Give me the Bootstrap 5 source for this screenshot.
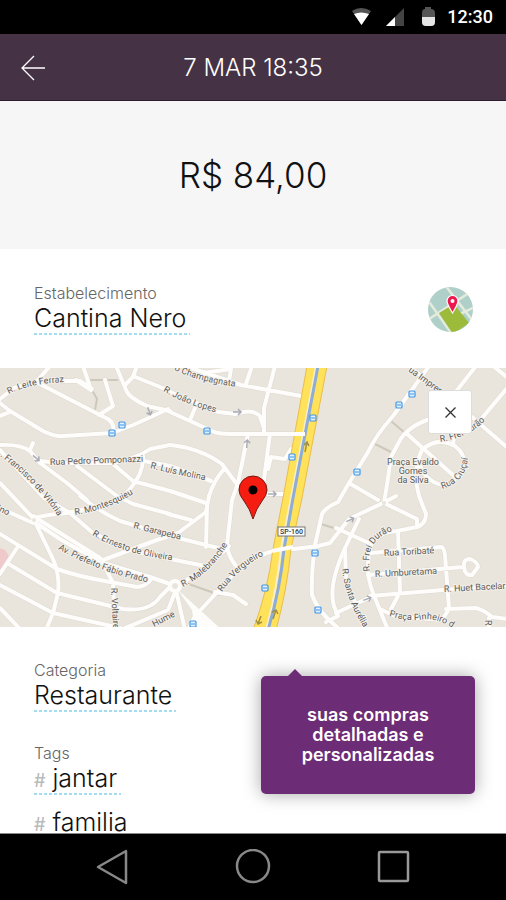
<!DOCTYPE html>
<html lang="pt-BR">
<head>
<meta charset="utf-8">
<meta name="viewport" content="width=device-width, initial-scale=1">
<title>Detalhes da compra</title>
<link href="https://cdn.jsdelivr.net/npm/bootstrap@5.3.0/dist/css/bootstrap.min.css" rel="stylesheet">
<style>
body{font-family:Inter,"Open Sans",sans-serif;font-weight:300;color:#111;background:#fff}
button{font-family:inherit;font-weight:inherit;color:inherit;background:none;border:0;padding:0}
svg{display:block}
.status-bar{height:34px;padding-right:13px;font:500 18px/34px Roboto,sans-serif}
.app-bar{display:grid;grid-template-columns:1fr auto 1fr;height:67px;padding:2px 21px 0;background:#453345;border-bottom:1px solid #2b1b2d}
.app-bar h1{font-size:24px;line-height:32px;font-weight:300}
.amount{height:148px;background:#f6f6f6;font-size:35px;line-height:44px}
.place{height:119px;padding:1px 33px 0 34px}
.caption{font-size:16px;line-height:19px;color:#666}
.value{display:block;font-size:25px;line-height:30px;padding:0 4px 2px 0;background:repeating-linear-gradient(90deg,#a4dcf2 0 3px,transparent 3px 5px) bottom/100% 2px no-repeat}
.value.plain{background:none;margin-top:12px}
.value .hash{font-size:18px;line-height:18px;font-weight:500;color:#bbb;margin-right:7px}
.tags-caption{margin-top:32px}
.map-area svg.streets{width:100%;height:259px}
.close-map{top:22px;right:34px;width:44px;height:44px;background:#fff;border:1px solid #ddd;border-radius:3px}
.streets text{font:400 9px Roboto,sans-serif;fill:#5c5a57;stroke:#f4f1ec;stroke-width:2px;paint-order:stroke;stroke-linejoin:round}
.details{padding:34px 31px 0 34px}
.callout{width:214px;height:118px;margin-top:15px;background:#6d2c76;border-radius:5px;box-shadow:0 0 18px rgba(0,0,0,.35);font-size:18px;line-height:20px;font-weight:600;color:#fff}
.callout::before{content:"";position:absolute;left:26px;top:-7px;border:solid transparent;border-width:0 8px 8px;border-bottom-color:#6d2c76}
.system-nav{height:67px;padding:0 95px;border-top:1px solid #888}
</style>
<script src="https://cdn.jsdelivr.net/npm/bootstrap@5.3.0/dist/js/bootstrap.bundle.min.js"></script>
</head>
<body>
<div class="d-flex flex-column vh-100 overflow-hidden">
  <div class="status-bar bg-black text-white d-flex justify-content-end align-items-center flex-shrink-0">
    <svg width="90" height="34" viewBox="0 0 90 34" class="me-2" aria-hidden="true">
      <path d="M3 11Q12 5 22 11L12.500 25Z" fill="#555"/><path d="M5 14Q12 11 20 14L12.500 25Z" fill="#fff"/>
      <path d="M55 8V26H37Z" fill="#444"/><path d="M46 17V26H37Z" fill="#fff"/>
      <path d="M76 7H82V9Q86 9 86 13V22Q86 26 82 26H77Q73 26 73 22V13Q73 9 76 9Z" fill="#555"/><path d="M73 17H86V22Q86 26 82 26H77Q73 26 73 22Z" fill="#e5e5e5"/>
    </svg>
    <span>12:30</span>
  </div>
  <header class="app-bar align-items-center text-white flex-shrink-0">
    <button type="button" class="text-start" aria-label="Voltar"><svg width="25" height="26" viewBox="0 0 25 26" fill="none" stroke="#fff" stroke-width="1.300"><path d="M24 13H1M13 1L1 13L13 25"/></svg></button>
    <h1 class="m-0">7 MAR 18:35</h1>
  </header>
  <main class="flex-grow-1 overflow-hidden">
    <div class="amount d-flex align-items-center justify-content-center">R$ 84,00</div>
    <section class="place d-flex align-items-center justify-content-between">
      <div>
        <div class="caption" id="cap-place">Estabelecimento</div>
        <button type="button" class="value" aria-describedby="cap-place">Cantina Nero</button>
      </div>
      <button type="button" aria-label="Ver no mapa"><svg width="45" height="45" viewBox="0 0 45 45">
        <clipPath id="disc"><circle cx="22.500" cy="22.500" r="22.500"/></clipPath>
        <g clip-path="url(#disc)"><path fill="#aed0c9" d="M0 0H45V45H0Z"/><path d="M-2 34L47 2M-1 12L26 50M17 -2L47 37M30 28L47 20" stroke="#e5ebdc" stroke-width="2.500" fill="none"/><path d="M11 26L26 17L41 36L25 47Z" fill="#9dbb3b"/></g>
        <path d="M24.500 26Q19 17 19 14A5.500 5.500 0 0 1 30 14Q30 17 24.500 26Z" fill="#ed174f" stroke="#fff" stroke-width="1.200"/><circle cx="24.500" cy="14" r="2" fill="#fff"/>
      </svg></button>
    </section>
    <section class="map-area position-relative">
      <svg class="streets" viewBox="0 368 506 259" preserveAspectRatio="xMidYMid slice" role="img" aria-label="Mapa">
        <defs>
          <g id="bus"><rect x="-3" y="-3" width="6" height="6" rx="1" fill="#e3f1fd" stroke="#3f96e6" stroke-width="1.200"/><path d="M-2 0H2" stroke="#3f96e6"/></g>
          <path id="way" d="M-4 0H4M1 -3L4 0L1 3" fill="none" stroke="#aaabb5" stroke-width="1.500"/>
          <g id="roads" fill="none" stroke-linejoin="round" stroke-linecap="round">
            <path d="M0 399L14 388L37 381L80 381L92 389M50 366L36 382L98 414L108 419Q115 424 113 431M105 380L113 406L99 415M83 366L91 390L76 380M116 366L127 392Q130 398 147 406L170 411M137 366L133 377L125 385M133 376L170 391M0 403L10 411L43 431Q55 437 63 436L112 433L133 425L153 416L168 409M0 416L10 412"/>
            <path d="M0 445Q20 444 30 451L40 463L67 483L87 500M33 443L30 450M40 461L60 463L113 463Q138 458 150 449L170 445M77 466L117 496L133 504L170 514M113 464L133 481L170 491L206 503M143 456Q144 473 130 489Q118 505 100 506M144 461L170 466L211 481M0 450L44 498L70 513L93 533L133 551L170 559L205 566M0 483L36 521"/>
            <path d="M0 508L33 523M33 518Q50 514 67 513L100 506M80 496Q100 512 120 521L170 536L218 548M33 521L60 539L100 562L150 577L170 584M33 516L100 558M35 522L53 559Q60 575 58 593L53 613L46 630M0 534L57 569Q80 577 110 582L137 587Q147 586 152 578M17 548L0 574M7 563L57 593L123 609Q150 612 160 597L172 585M0 585L53 613L120 628M0 608L20 629M103 560L157 540L178 533L206 512L209 496M102 561L113 583L115 630M123 629L168 610L176 590"/>
            <path d="M185 366L241 385L301 396M203 373L231 369L229 381M252 366L246 384M275 366L264 408V432M168 391L218 412L236 414Q252 408 260 416L264 428M195 408L190 420M168 411L212 431Q218 434 230 434H305M248 434L238 483L232 500L227 545Q228 556 236 566M270 434L262 494H284M268 469L271 457L285 459L291 449M170 445Q200 448 222 464L236 483M224 469Q213 482 209 496M168 514L191 520M207 506L206 547M229 546L208 566L178 586M318 546L270 552Q255 556 235 573L195 616L188 630M176 590L185 630M215 592L233 595L246 604"/>
            <path d="M429 366L393 416Q376 435 368 452L349 483L338 502Q325 508 322 514L315 545Q311 575 312 595Q318 612 338 628M314 547L330 543L349 519L383 503L396 496M359 519L345 548Q328 585 334 606L338 616L326 622M476 366L440 412M493 366L508 378M508 387L472 430M472 417L508 448M440 416Q408 424 399 442L391 457Q388 480 384 503M406 433L454 476M453 445L455 430M455 446Q470 458 461 475L446 486Q425 482 420 465M455 446Q437 436 422 450Q412 470 419 496L426 514Q426 524 417 527L397 531Q378 532 371 545Q364 570 373 593L388 630M349 483L378 500M384 503L417 519V527M409 366L440 392"/>
            <path d="M336 528L369 543M398 531L400 592L391 609M371 553L441 547Q444 547 445 555L449 608M368 575L463 567M464 567Q463 559 470 559Q478 562 478 567L472 575Q465 576 464 567M370 596L443 590L508 585M336 613L373 596M446 609L476 608Q484 610 492 617L508 619M380 609L395 616L442 620L449 609M489 618V630M345 548L346 580L366 630"/>
          </g>
          <path id="p1" d="M0 456Q36 482 62 522"/><path id="p2" d="M92 535Q125 555 178 561"/><path id="p3" d="M58 549Q100 573 155 584"/><path id="p4" d="M183 587Q216 570 232 536"/><path id="p5" d="M222 592Q242 563 270 553"/><path id="p6" d="M370 571Q364 538 396 530"/><path id="p7" d="M342 569Q346 602 368 634"/><path id="p8" d="M389 616Q405 621 420 620Q438 616 458 632"/><path id="p9" d="M442 489Q468 481 468 454"/><path id="p10" d="M440 442Q474 437 490 414"/><path id="p11" d="M174 370Q205 384 246 388"/><path id="p12" d="M163 391Q188 406 222 414"/><path id="p13" d="M150 468Q185 477 216 482"/><path id="p14" d="M9 394Q30 383 68 382"/><path id="p15" d="M75 515Q108 510 138 491"/>
        </defs>
        <path fill="#e9e5dc" d="M0 360H506V640H0Z"/>
        <circle cx="-2" cy="559" r="11" fill="#f0c9cb"/>
        <path d="M90 380H118M92 390L97 399L95 410M391 421L405 433M375 444L393 453M186 583L217 594M321 524L337 529" fill="none" stroke="#ccc8bc" stroke-width="2"/>
        <use href="#roads" stroke="#dedad1" stroke-width="5"/>
        <use href="#roads" stroke="#fefdfb" stroke-width="4"/>
        <path d="M178 590L222 630L195 630L192 610Z" fill="#fefdfb"/>
        <circle cx="175" cy="586" r="5" fill="#e9e5dc" stroke="#fefdfb" stroke-width="4"/><circle cx="34" cy="520" r="2" fill="#e9e5dc"/><circle cx="384" cy="503" r="2" fill="#e9e5dc"/>
        <path d="M307 366H327L302 498L291 549Q287 590 276 630H253Q268 590 273 549L283 498Z" fill="#ffe15a" stroke="#e9bd49"/>
        <path d="M316 366L291 498L281 549Q277 590 266 630" fill="none" stroke="#f6efd2" stroke-width="2"/>
        <path d="M318 366L293 498L284 549Q280 590 268 630" fill="none" stroke="#8eadd6" stroke-width="3"/>
        <path d="M272 551L293 547M290 434H305" stroke="#fefdfb" stroke-width="4"/>
        <path d="M305 452L307 442M304 445L307 442L309 446M273 619L276 610M272 612L276 610L278 614M261 616L258 624M256 620L258 624L262 622" fill="none" stroke="#a08f45" stroke-width="1.500"/>
        <use href="#way" transform="translate(237 412)"/><use href="#way" transform="translate(247 444) rotate(-85)"/><use href="#way" transform="translate(272 494)"/><use href="#way" transform="translate(149 411) rotate(70)"/><use href="#way" transform="translate(36 458) rotate(40)"/><use href="#way" transform="translate(350 520) rotate(-25)"/><use href="#way" transform="translate(367 599) rotate(-20)"/>
        <use href="#bus" x="122" y="425"/><use href="#bus" x="112" y="433"/><use href="#bus" x="207" y="431"/><use href="#bus" x="313" y="418"/><use href="#bus" x="292" y="457"/><use href="#bus" x="412" y="394"/><use href="#bus" x="399" y="405"/><use href="#bus" x="357" y="472"/><use href="#bus" x="315" y="553"/><use href="#bus" x="265" y="588"/><use href="#bus" x="318" y="610"/><use href="#bus" x="193" y="624"/>
        <text><textPath href="#p14">R. Leite Ferraz</textPath></text>
        <text transform="translate(50 465) rotate(-2)">Rua Pedro Pomponazzi</text>
        <text><textPath href="#p1">. Francisco de Vitória</textPath></text>
        <text><textPath href="#p15">R. Montesquieu</textPath></text>
        <text transform="translate(-8 508) rotate(25)">rlino</text>
        <text transform="translate(133 528) rotate(14)">R. Garapeba</text>
        <text><textPath href="#p2">R. Ernesto de Oliveira</textPath></text>
        <text><textPath href="#p3">Av. Prefeito Fábio Prado</textPath></text>
        <text transform="translate(111 588) rotate(87)">R. Voltaire</text>
        <text transform="translate(154 627) rotate(-27)">Hume</text>
        <text><textPath href="#p11">o Champagnata</textPath></text>
        <text><textPath href="#p12">R. João Lopes</textPath></text>
        <text><textPath href="#p13">R. Luís Molina</textPath></text>
        <text><textPath href="#p4">R. Malebranche</textPath></text>
        <text><textPath href="#p5">Rua Vergueiro</textPath></text>
        <text transform="translate(408 371) rotate(36)">ua Impren</text>
        <text><textPath href="#p10">R. Frei Durão</textPath></text>
        <text><textPath href="#p9">Rua Cruçaí</textPath></text>
        <text text-anchor="middle"><tspan x="413" y="465">Praça Evaldo</tspan><tspan x="413" y="474">Gomes</tspan><tspan x="413" y="483">da Silva</tspan></text>
        <text><textPath href="#p6">R. Frei Durão</textPath></text>
        <text transform="translate(384 556) rotate(-3)">Rua Toribaté</text>
        <text transform="translate(375 577) rotate(-3)">R. Umburetama</text>
        <text transform="translate(444 592) rotate(-3)">R. Huet Bacelar</text>
        <text><textPath href="#p7">R. Santa Aurélia</textPath></text>
        <text><textPath href="#p8">Praça Pinheiro d</textPath></text>
        <text transform="translate(485 620) rotate(90)">R</text>
        <rect x="278" y="527" width="27" height="9" fill="#fff" stroke="#777"/><text x="280" y="534" style="font-size:7px;font-weight:500;stroke:none;fill:#333">SP-160</text>
        <path d="M253 519Q250 509 244 501Q239 495 239 490A14 14 0 0 1 267 490Q267 495 262 501Q256 509 253 519Z" fill="#f51c12" stroke="#7a150f"/><circle cx="253" cy="490" r="4.500"/>
      </svg>
      <button type="button" class="close-map position-absolute d-flex align-items-center justify-content-center" aria-label="Fechar mapa"><svg width="11" height="11" viewBox="0 0 11 11" stroke="#333" stroke-width="1.300"><path d="M0.500 0.500L10.500 10.500M10.500 0.500L0.500 10.500"/></svg></button>
    </section>
    <section class="details d-flex justify-content-between align-items-start">
      <div class="d-flex flex-column align-items-start">
        <div class="caption" id="cap-cat">Categoria</div>
        <button type="button" class="value" aria-describedby="cap-cat">Restaurante</button>
        <div class="caption tags-caption" id="cap-tags">Tags</div>
        <button type="button" class="value" aria-describedby="cap-tags"><span class="hash">#</span>jantar</button>
        <button type="button" class="value plain" aria-describedby="cap-tags"><span class="hash">#</span>familia</button>
      </div>
      <div class="callout position-relative d-flex align-items-center justify-content-center text-center">suas compras<br>detalhadas e<br>personalizadas</div>
    </section>
  </main>
  <nav class="system-nav bg-black d-flex align-items-center justify-content-between flex-shrink-0" aria-label="Sistema">
    <button type="button" aria-label="Voltar"><svg width="34" height="36" viewBox="0 0 34 36" fill="none" stroke="#888" stroke-width="2.500" stroke-linejoin="round"><path d="M3 18L31 2V34Z"/></svg></button>
    <button type="button" aria-label="Início"><svg width="36" height="36" viewBox="0 0 36 36" fill="none" stroke="#888" stroke-width="2.500"><circle cx="18" cy="17" r="16"/></svg></button>
    <button type="button" aria-label="Recentes"><svg width="34" height="36" viewBox="0 0 34 36" fill="none" stroke="#999" stroke-width="2.500"><rect x="2" y="3" width="29" height="29" rx="1"/></svg></button>
  </nav>
</div>
</body>
</html>
